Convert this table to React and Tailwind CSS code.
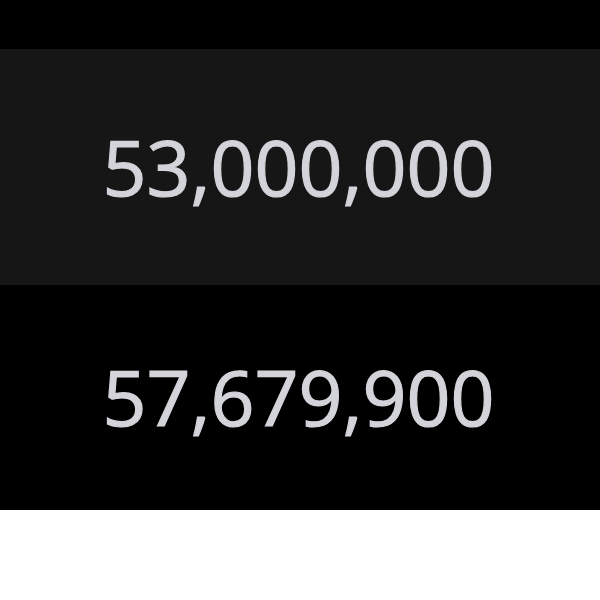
export default function App() {
  const rows = [
    { value: '53,000,000', bg: 'bg-[#161616]', h: 'h-[236px]' },
    { value: '57,679,900', bg: 'bg-black', h: 'h-[225px]' },
  ]

  return (
    <div className="w-[600px] h-[600px] bg-white flex flex-col" style={{ fontFamily: '"Open Sans", "Noto Sans", sans-serif' }}>
      <div className="h-[49px] bg-black" />
      {rows.map(r => (
        <div key={r.value} className={`${r.h} ${r.bg} flex items-center justify-center pr-[3px]`}>
          <span className="text-[77px] leading-none text-[#d3d3da] [-webkit-text-stroke:1.2px_#d3d3da] blur-[0.7px] -mt-[2px]">{r.value}</span>
        </div>
      ))}
    </div>
  )
}
